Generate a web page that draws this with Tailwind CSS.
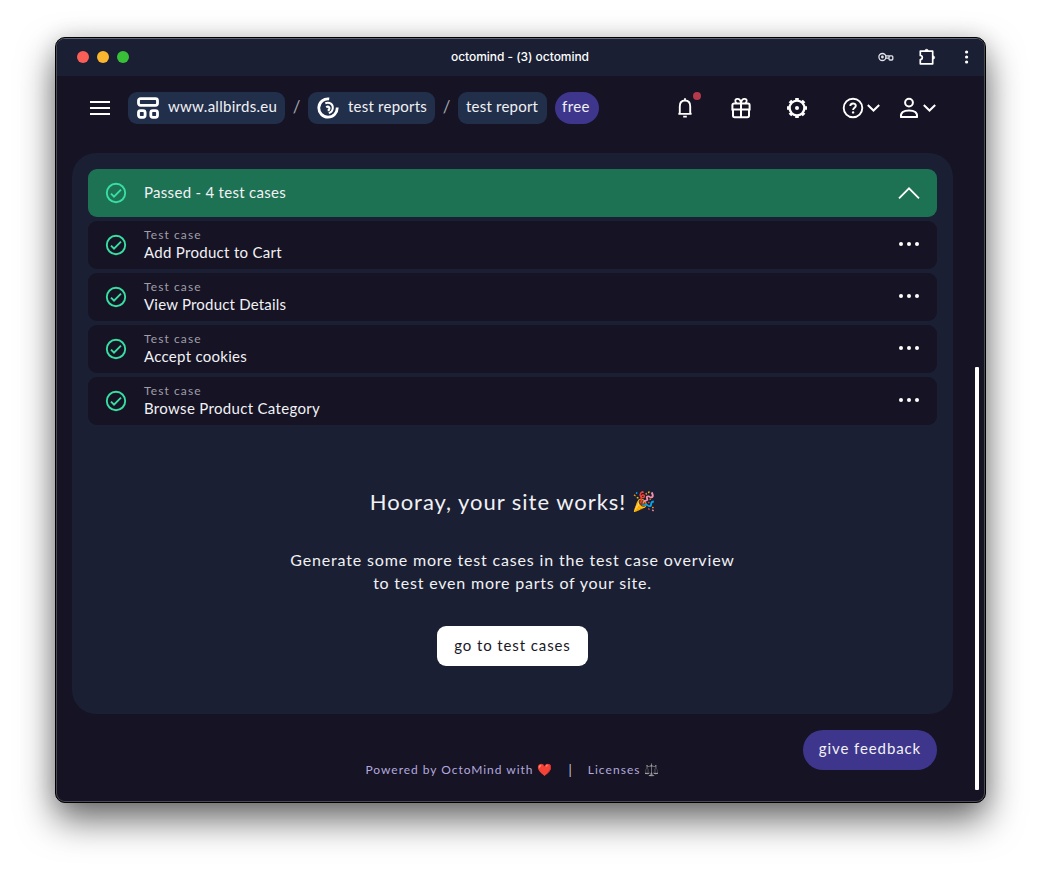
<!DOCTYPE html>
<html lang="en">
<head>
<meta charset="utf-8">
<title>octomind - (3) octomind</title>
<script src="https://cdn.jsdelivr.net/npm/@tailwindcss/browser@4"></script>
</head>
<body class="h-[876px] w-[1041px] overflow-hidden bg-white pl-[55px] pt-[37px] font-['Lato',sans-serif] text-[15px] text-[#f1f1f4]">
<div class="h-[766px] w-[931px] rounded-[10px] border border-black bg-black shadow-[0_17px_36px_rgba(0,0,0,0.58),0_0_22px_rgba(0,0,0,0.12)]">
<div class="relative flex h-full flex-col overflow-hidden rounded-[9px] border border-[#4a4a54] border-t-[#5d6674] bg-[#151324]">

  <!-- Title bar -->
  <header class="flex h-[37px] shrink-0 items-center bg-[#1a1f33] pb-[2px] pl-5 pr-3">
    <div class="flex w-[200px] gap-2">
      <span class="size-3 rounded-full bg-[#f95f56]"></span>
      <span class="size-3 rounded-full bg-[#fbb62f]"></span>
      <span class="size-3 rounded-full bg-[#38c138]"></span>
    </div>
    <h1 class="flex-1 pr-[9px] text-center font-['Inter',sans-serif] text-[12px] font-medium leading-4 tracking-[-0.04px] text-white">octomind - (3) octomind</h1>
    <div class="flex w-[200px] items-center justify-end text-white">
      <svg class="mr-[24px] h-[10px] w-4" viewBox="0 0 16 10" fill="none" stroke="#e4e5e9" stroke-width="1.3"><circle cx="4.4" cy="5" r="3.5"/><circle cx="4.4" cy="5" r="1.4" fill="#e4e5e9" stroke="none"/><path d="M7.800 3.800h3.700M7.800 6.200h3"/><rect x="11" y="3.800" width="3.800" height="4.200" rx="1"/></svg>
      <svg class="mr-[29px] h-[18px] w-[18px]" viewBox="0 0 18 18" fill="none" stroke="#fff" stroke-width="1.7" stroke-linejoin="round"><path d="M2.300 3.200h12.400v12.600H2.300v-4.300a2 2 0 0 0 0-4z"/><path d="M7 2.900a1.600 1.600 0 0 1 3.200 0zM15 7.900a1.600 1.600 0 0 1 0 3.200z" fill="#fff" stroke-width=".8"/></svg>
      <svg class="mr-[3px] h-[14px] w-1" viewBox="0 0 4 14" fill="#fff"><circle cx="1.600" cy="2" r="1.600"/><circle cx="1.600" cy="7" r="1.600"/><circle cx="1.600" cy="12" r="1.600"/></svg>
    </div>
  </header>

  <!-- Navigation -->
  <nav class="flex h-[64px] shrink-0 items-center pl-[33px] pr-[48px]">
    <svg class="mr-[18px] h-4 w-5 shrink-0" viewBox="0 0 20 16" stroke="#fff" stroke-width="2"><path d="M0 2h20M0 8h20M0 14h20"/></svg>
    <a class="flex h-8 w-[157px] shrink-0 items-center rounded-[9px] bg-[#222f4b] pl-[9px]">
      <svg class="mr-[9px] size-[22px]" viewBox="0 0 22 22" fill="none" stroke="#fff" stroke-width="2.800"><rect x="1.500" y="1.700" width="19" height="6.600" rx="2"/><rect x="1.500" y="13.600" width="6.600" height="6.700" rx="2"/><rect x="13.800" y="13.600" width="6.700" height="6.700" rx="2"/></svg>
      <span class="pb-1 leading-5 tracking-[0.27px]">www.allbirds.eu</span>
    </a>
    <span class="w-[23px] shrink-0 pb-[3px] text-center text-[17px] leading-5 text-[#a3a2aa]">/</span>
    <a class="flex h-8 w-[127px] shrink-0 items-center rounded-[9px] bg-[#222f4b] pl-[9px]">
      <svg class="mr-[9px] size-[22px]" viewBox="0 0 22 22" fill="none" stroke="#fff"><path stroke-width="2.800" d="M12.200 1.900A9.200 9.200 0 1 0 20.200 10.500"/><path stroke-width="2" d="M8.300 6.300c4.500-1.600 7.800 1 7.500 4.800-.2 2.400-1.700 4.300-4 5"/><path stroke-width="2.200" d="M9.300 10.300c1.600-1.300 3.300-.3 3.100 1.300-.1 1-.8 1.600-1.700 1.700"/></svg>
      <span class="pb-1 leading-5 tracking-[0.23px]">test reports</span>
    </a>
    <span class="w-[23px] shrink-0 pb-[3px] text-center text-[17px] leading-5 text-[#a3a2aa]">/</span>
    <a class="flex h-8 w-[89px] shrink-0 items-center rounded-[9px] bg-[#222f4b] pl-2"><span class="pb-1 leading-5 tracking-[0.22px]">test report</span></a>
    <span class="ml-2 flex h-8 w-[44px] shrink-0 items-center rounded-full bg-[#3e368c] pl-[7px]"><span class="pb-1 leading-5 tracking-[0.4px]">free</span></span>

    <div class="ml-auto flex items-center">
      <span class="relative mr-[38px]">
        <svg class="h-[22px] w-4" viewBox="0 0 16 22" fill="none" stroke="#fff" stroke-width="1.900"><path d="M2.800 9.200C2.800 5.600 5 3.500 8 3.500s5.200 2.100 5.200 5.700v6.300l.6 1.400H2.200l.6-1.400z" stroke-linejoin="round"/><path d="M8 1.200v2.300M6.200 19.600h3.600"/></svg>
        <span class="absolute left-4 top-[-5px] size-2 rounded-full bg-[#b5384b]"></span>
      </span>
      <svg class="mr-[35px] h-[22px] w-[20px]" viewBox="0 0 20 22" fill="none" stroke="#fff" stroke-width="2"><path d="M3 6.600h14a1.600 1.600 0 0 1 1.600 1.600v4.200H1.400V8.200A1.600 1.600 0 0 1 3 6.600zM2 12.400v6.200a1.600 1.600 0 0 0 1.600 1.600h12.800a1.600 1.600 0 0 0 1.600-1.600v-6.200M10 6.600v13.600"/><path stroke-width="1.800" d="M10 6.400C9.600 3 8 1.800 6.300 1.900 3.600 2.100 3.900 5.200 5.800 6.400M10 6.400C10.400 3 12 1.800 13.700 1.900 16.400 2.100 16.100 5.200 14.200 6.400"/></svg>
      <svg class="mr-[34px] size-[22px]" viewBox="0 0 22 22" fill="none" stroke="#fff"><circle cx="11" cy="11" r="7.400" stroke-width="2.400"/><circle cx="11" cy="11" r="2" fill="#fff" stroke="none"/><path stroke-width="3.600" d="M11 1v2.400M11 18.600V21M1 11h2.400M18.600 11H21M3.900 3.900l1.700 1.700M16.400 16.400l1.700 1.700M3.900 18.100l1.700-1.700M16.400 5.600l1.700-1.700"/></svg>
      <svg class="mr-[3px] size-[22px]" viewBox="0 0 22 22" fill="none" stroke="#fff" stroke-width="1.900"><circle cx="11" cy="11" r="9.300"/><path d="M8.300 9c0-3.400 5.500-3.300 5.500-.3 0 2-2.700 2-2.700 4.300"/><circle cx="11.100" cy="15.400" r="1.200" fill="#fff" stroke="none"/></svg>
      <svg class="mr-[19px] h-[8px] w-[13px]" viewBox="0 0 13 8" fill="none" stroke="#fff" stroke-width="2"><path d="M.8 1l5.700 5.500L12.200 1"/></svg>
      <svg class="mr-[4px] h-[22px] w-[20px]" viewBox="0 0 20 22" fill="none" stroke="#fff" stroke-width="2"><circle cx="10" cy="5.600" r="3.900"/><path d="M2 20c-.6-4.300 2.500-6.600 8-6.600s8.600 2.300 8 6.600z" stroke-linejoin="round"/></svg>
      <svg class="h-[8px] w-[13px]" viewBox="0 0 13 8" fill="none" stroke="#fff" stroke-width="2"><path d="M.8 1l5.700 5.500L12.200 1"/></svg>
    </div>
  </nav>

  <!-- Report card -->
  <main class="ml-[15px] mt-[13px] h-[561px] w-[881px] shrink-0 rounded-[24px] bg-[#1a1f33] p-4">
    <section class="grid gap-1">
      <div class="flex h-12 items-center rounded-[9px] bg-[#1e7254] px-[17px]">
        <svg class="mr-[17px] size-[22px]" viewBox="0 0 22 22" fill="none" stroke="#38dfa2" stroke-width="1.900"><circle cx="11" cy="11" r="9.200"/><path d="M6 11.700l3 3 7-7"/></svg>
        <span class="flex-1 pb-[2px] leading-5 tracking-[0.3px]">Passed - 4 test cases</span>
        <svg class="h-3 w-[22px]" viewBox="0 0 22 12" fill="none" stroke="#fff" stroke-width="1.800"><path d="M1 11.300L11 1.300l10 10"/></svg>
      </div>
      <div class="flex h-12 items-center rounded-[9px] bg-[#151324] px-[17px]">
        <svg class="mr-[17px] size-[22px]" viewBox="0 0 22 22" fill="none" stroke="#38dfa2" stroke-width="1.900"><circle cx="11" cy="11" r="9.200"/><path d="M6 11.700l3 3 7-7"/></svg>
        <div class="flex-1 pb-[2px]"><p class="pt-px text-[12px] leading-[15px] tracking-[1.100px] text-[#a09fa8]">Test case</p><p class="leading-5 tracking-[0.3px]">Add Product to Cart</p></div>
        <svg class="mb-[2px] h-1 w-[22px]" viewBox="0 0 22 4" fill="#fff"><circle cx="3" cy="2" r="2"/><circle cx="11" cy="2" r="2"/><circle cx="19" cy="2" r="2"/></svg>
      </div>
      <div class="flex h-12 items-center rounded-[9px] bg-[#151324] px-[17px]">
        <svg class="mr-[17px] size-[22px]" viewBox="0 0 22 22" fill="none" stroke="#38dfa2" stroke-width="1.900"><circle cx="11" cy="11" r="9.200"/><path d="M6 11.700l3 3 7-7"/></svg>
        <div class="flex-1 pb-[2px]"><p class="pt-px text-[12px] leading-[15px] tracking-[1.100px] text-[#a09fa8]">Test case</p><p class="leading-5 tracking-[0.2px]">View Product Details</p></div>
        <svg class="mb-[2px] h-1 w-[22px]" viewBox="0 0 22 4" fill="#fff"><circle cx="3" cy="2" r="2"/><circle cx="11" cy="2" r="2"/><circle cx="19" cy="2" r="2"/></svg>
      </div>
      <div class="flex h-12 items-center rounded-[9px] bg-[#151324] px-[17px]">
        <svg class="mr-[17px] size-[22px]" viewBox="0 0 22 22" fill="none" stroke="#38dfa2" stroke-width="1.900"><circle cx="11" cy="11" r="9.200"/><path d="M6 11.700l3 3 7-7"/></svg>
        <div class="flex-1 pb-[2px]"><p class="pt-px text-[12px] leading-[15px] tracking-[1.100px] text-[#a09fa8]">Test case</p><p class="leading-5 tracking-[0.28px]">Accept cookies</p></div>
        <svg class="mb-[2px] h-1 w-[22px]" viewBox="0 0 22 4" fill="#fff"><circle cx="3" cy="2" r="2"/><circle cx="11" cy="2" r="2"/><circle cx="19" cy="2" r="2"/></svg>
      </div>
      <div class="flex h-12 items-center rounded-[9px] bg-[#151324] px-[17px]">
        <svg class="mr-[17px] size-[22px]" viewBox="0 0 22 22" fill="none" stroke="#38dfa2" stroke-width="1.900"><circle cx="11" cy="11" r="9.200"/><path d="M6 11.700l3 3 7-7"/></svg>
        <div class="flex-1 pb-[2px]"><p class="pt-px text-[12px] leading-[15px] tracking-[1.100px] text-[#a09fa8]">Test case</p><p class="leading-5 tracking-[0.32px]">Browse Product Category</p></div>
        <svg class="mb-[2px] h-1 w-[22px]" viewBox="0 0 22 4" fill="#fff"><circle cx="3" cy="2" r="2"/><circle cx="11" cy="2" r="2"/><circle cx="19" cy="2" r="2"/></svg>
      </div>
    </section>

    <section class="flex flex-col items-center pt-[61px]">
      <h2 class="flex h-8 items-center gap-[6px] pl-px text-[22px] leading-8 tracking-[0.97px]"><span>Hooray, your site works!</span><span class="pb-[2px] text-[19px] tracking-normal">🎉</span></h2>
      <p class="mt-[30px] text-center text-[16px] leading-[23px]"><span class="tracking-[0.84px]">Generate some more test cases in the test case overview</span><br><span class="tracking-[0.79px]">to test even more parts of your site.</span></p>
      <button class="mt-[32px] h-10 w-[151px] rounded-[9px] bg-white pb-[2px] text-[15px] leading-5 tracking-[0.89px] text-[#1a1828]">go to test cases</button>
    </section>
  </main>

  <footer class="flex h-[88px] w-[910px] items-center justify-center pt-[24px] text-[12px] leading-5 text-[#b3a9dd]">
    <span class="tracking-[0.97px]">Powered by OctoMind with</span>
    <span class="ml-1 text-[12px]">❤️</span>
    <span class="mx-4 text-[13px] text-[#d0cfd4]">|</span>
    <span class="tracking-[1.050px]">Licenses</span>
    <span class="ml-[3px] text-[12px] brightness-110 grayscale">⚖️</span>
  </footer>

  <!-- Floating controls -->
  <button class="absolute bottom-[31px] right-[47px] h-10 w-[134px] rounded-full bg-[#3e368c] pb-1 text-[15px] leading-5 tracking-[0.9px]">give feedback</button>
  <div class="absolute bottom-[11px] right-[5px] h-[423px] w-1 rounded-[1px] bg-white"></div>
</div>
</div>
</body>
</html>
